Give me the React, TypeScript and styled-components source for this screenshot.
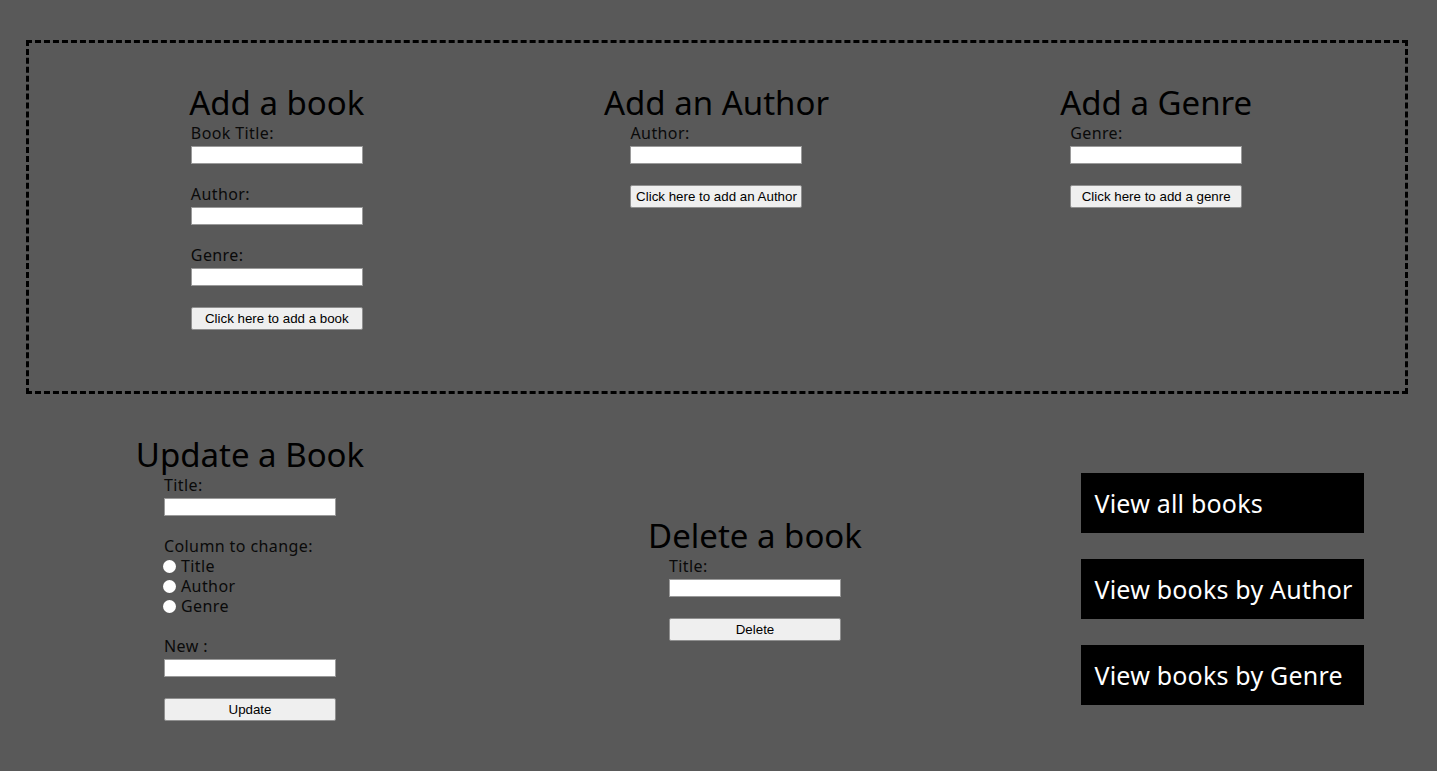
import { createGlobalStyle, styled } from 'styled-components';

const GlobalStyle = createGlobalStyle`
  html, body {
    margin: 0;
    padding: 0;
    background: #595959;
  }
  body {
    font-family: "Noto Sans", "Open Sans", sans-serif;
    color: #000;
  }
`

const Page = styled.div`
  padding: 40px 29px 0 26px;
  min-height: 771px;
  box-sizing: border-box;
`

const AddBox = styled.section`
  height: 354px;
  box-sizing: border-box;
  border: 3px dashed #000;
  padding: 42px 29px 0 28px;
  display: grid;
  grid-template-columns: 1fr 1fr 1fr;
  align-items: start;
`

const BottomRow = styled.section`
  margin-top: 43px;
  display: grid;
  grid-template-columns: 448px 562px 1fr;
  align-items: center;
`

const Column = styled.div`
  display: flex;
  flex-direction: column;
  align-items: center;
`

const Heading = styled.h2`
  margin: 0 0 3px;
  font-size: 33px;
  line-height: 36px;
  font-weight: 400;
  white-space: nowrap;
`

const Form = styled.form`
  width: 172px;
  display: flex;
  flex-direction: column;
`

const Field = styled.div`
  display: flex;
  flex-direction: column;
  margin-bottom: 21px;
`

const Label = styled.label<{ $tight?: boolean }>`
  display: block;
  font-size: 16px;
  letter-spacing: 0.4px;
  line-height: 18px;
  margin-bottom: ${(p) => (p.$tight ? '1px' : '4px')};
  color: #0a0a0a;
  white-space: nowrap;
`

const TextInput = styled.input`
  width: 172px;
  height: 18px;
  box-sizing: border-box;
  margin: 0;
  padding: 0 3px;
  border: 1px solid #9a9a9a;
  background: #fff;
  outline: none;
`

const RadioRow = styled.label`
  display: flex;
  align-items: center;
  height: 20px;
  font-size: 16px;
  letter-spacing: 0.4px;
  color: #0a0a0a;
`

const Radio = styled.input`
  appearance: none;
  width: 13px;
  height: 13px;
  margin: 0 5px 0 -1px;
  border-radius: 50%;
  background: #fff;
  border: none;
`

const SubmitButton = styled.button`
  width: 172px;
  height: 23px;
  box-sizing: border-box;
  margin: 0;
  padding: 0 4px;
  border: 1px solid #8f8f8f;
  border-radius: 2px;
  background: #efefef;
  color: #000;
  font-family: "Liberation Sans", Arial, sans-serif;
  font-size: 13.33px;
  white-space: nowrap;
`

const NavColumn = styled.nav`
  margin-top: 20px;
  display: flex;
  flex-direction: column;
  align-items: center;
  gap: 26px;
`

const NavButton = styled.a`
  display: flex;
  align-items: center;
  width: 283px;
  height: 60px;
  box-sizing: border-box;
  padding-left: 14px;
  background: #000;
  color: #fff;
  font-size: 25px;
  letter-spacing: 0.2px;
  text-decoration: none;
  white-space: nowrap;
`

function TextField({ label }: { label: string }) {
  return (
    <Field>
      <Label>{label}</Label>
      <TextInput type="text" />
    </Field>
  )
}

export default function App() {
  return (
    <>
      <GlobalStyle />
      <Page>
        <AddBox>
          <Column>
            <Heading>Add a book</Heading>
            <Form onSubmit={(e) => e.preventDefault()}>
              <TextField label="Book Title:" />
              <TextField label="Author:" />
              <TextField label="Genre:" />
              <SubmitButton type="submit">Click here to add a book</SubmitButton>
            </Form>
          </Column>
          <Column>
            <Heading>Add an Author</Heading>
            <Form onSubmit={(e) => e.preventDefault()}>
              <TextField label="Author:" />
              <SubmitButton type="submit">Click here to add an Author</SubmitButton>
            </Form>
          </Column>
          <Column>
            <Heading>Add a Genre</Heading>
            <Form onSubmit={(e) => e.preventDefault()}>
              <TextField label="Genre:" />
              <SubmitButton type="submit">Click here to add a genre</SubmitButton>
            </Form>
          </Column>
        </AddBox>

        <BottomRow>
          <Column>
            <Heading>Update a Book</Heading>
            <Form onSubmit={(e) => e.preventDefault()}>
              <TextField label="Title:" />
              <Field>
                <Label $tight>Column to change:</Label>
                {['Title', 'Author', 'Genre'].map((col) => (
                  <RadioRow key={col}>
                    <Radio type="radio" name="column" value={col} />
                    {col}
                  </RadioRow>
                ))}
              </Field>
              <TextField label="New :" />
              <SubmitButton type="submit">Update</SubmitButton>
            </Form>
          </Column>
          <Column>
            <Heading>Delete a book</Heading>
            <Form onSubmit={(e) => e.preventDefault()}>
              <TextField label="Title:" />
              <SubmitButton type="submit">Delete</SubmitButton>
            </Form>
          </Column>
          <NavColumn>
            <NavButton href="#">View all books</NavButton>
            <NavButton href="#">View books by Author</NavButton>
            <NavButton href="#">View books by Genre</NavButton>
          </NavColumn>
        </BottomRow>
      </Page>
    </>
  )
}
